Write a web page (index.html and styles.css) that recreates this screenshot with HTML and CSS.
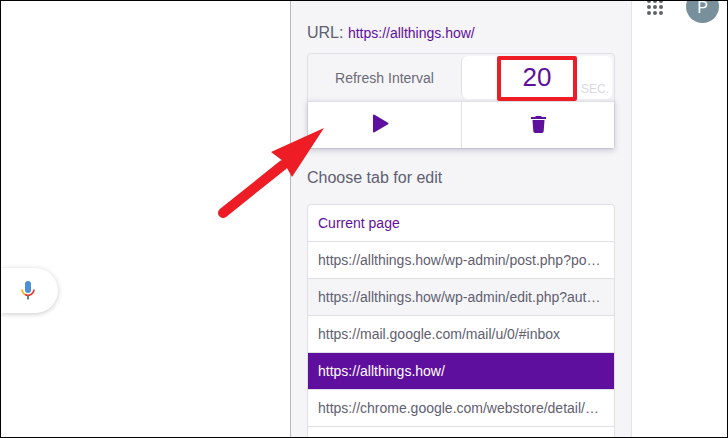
FILE: index.html
```html
<!DOCTYPE html>
<html lang="en">
<head>
  <meta charset="UTF-8">
  <title>Auto Refresh</title>
  <link rel="stylesheet" href="styles.css">
</head>
<body>
  <div class="frame">
    <div class="left-side">
      <div class="search-pill">
        <svg width="14" height="20" viewBox="0 0 14 20">
          <rect x="4" y="0" width="6" height="12" rx="3" fill="#4a8fd8"/>
          <path d="M1 8.500a6 6 0 0 0 3 5" fill="none" stroke="#f4b400" stroke-width="1.6"/>
          <path d="M4 13.500a6 6 0 0 0 6 0a6 6 0 0 0 3-5" fill="none" stroke="#e53935" stroke-width="1.6"/>
          <rect x="6" y="14.500" width="2" height="4" fill="#5b8a72"/>
        </svg>
      </div>
    </div>

    <div class="panel">
      <div class="url-line">URL: <span class="url-value">https://allthings.how/</span></div>

      <div class="controls">
        <div class="control-row">
          <div class="cell interval-label">Refresh Interval</div>
          <div class="cell interval-value">
            <span class="seconds">20</span>
            <span class="sec-unit">SEC.</span>
          </div>
        </div>
        <div class="control-row buttons-row">
          <div class="cell icon-cell play-cell">
            <svg width="17" height="19" viewBox="0 0 17 19"><path d="M1 1.500v16a1 1 0 0 0 1.500.8L16 10.200a.9.9 0 0 0 0-1.500L2.500.7A1 1 0 0 0 1 1.500z" fill="#5f0f9e"/></svg>
          </div>
          <div class="cell icon-cell trash-cell">
            <svg width="15" height="17" viewBox="0 0 15 17"><path d="M5 0h5l1 1h4v2H0V1h4zM1.500 4h12l-.8 11.200a2 2 0 0 1-2 1.800H4.300a2 2 0 0 1-2-1.800z" fill="#5f0f9e"/></svg>
          </div>
        </div>
      </div>

      <div class="choose-title">Choose tab for edit</div>

      <ul class="tab-list">
        <li class="current">Current page</li>
        <li>https://allthings.how/wp-admin/post.php?po…</li>
        <li class="hovered">https://allthings.how/wp-admin/edit.php?aut…</li>
        <li>https://mail.google.com/mail/u/0/#inbox</li>
        <li class="selected">https://allthings.how/</li>
        <li>https://chrome.google.com/webstore/detail/…</li>
        <li></li>
      </ul>
    </div>

    <div class="right-side">
      <div class="apps-grid">
        <i></i><i></i><i></i><i></i><i></i><i></i><i></i><i></i><i></i>
      </div>
      <div class="avatar">P</div>
    </div>

    <div class="red-box"></div>
    <svg class="arrow" width="120" height="100" viewBox="0 0 120 100">
      <path d="M12 93L72 45" stroke="#ee1c25" stroke-width="10" stroke-linecap="round" fill="none"/>
      <path d="M113 8L60 32L72 41L81 57z" fill="#ee1c25"/>
    </svg>
  </div>
</body>
</html>
```
FILE: styles.css
```css
* {
  box-sizing: border-box;
}

html, body {
  margin: 0;
  height: 100%;
}

body {
  font-family: "Liberation Sans", Arial, sans-serif;
  background: #fff;
  overflow: hidden;
}

.frame {
  position: relative;
  width: 728px;
  height: 438px;
  display: flex;
  border: 1px solid #000;
  overflow: hidden;
}

.left-side {
  width: 289px;
  padding-top: 267px;
}

.search-pill {
  width: 57px;
  height: 45px;
  background: #fff;
  border-radius: 0 23px 23px 0;
  box-shadow: 0 1px 5px rgba(60, 64, 67, 0.28);
  display: flex;
  align-items: center;
  justify-content: flex-end;
  padding-right: 23px;
}

.panel {
  width: 342px;
  background: #f5f5f8;
  border-left: 1px solid #b8b8bc;
  border-right: 1px solid #e4e4e8;
  padding: 22px 15px 0 16px;
}

.url-line {
  font-size: 16px;
  line-height: 20px;
  color: #5f6070;
  height: 30px;
}

.url-value {
  font-size: 14px;
  color: #5f0f9e;
}

.controls {
  border: 1px solid #dfdfe6;
  border-radius: 4px;
  width: 308px;
}

.control-row {
  display: flex;
  height: 47px;
}

.cell {
  flex: 1;
  display: flex;
  align-items: center;
  justify-content: center;
}

.cell:first-child {
  flex: 0 0 153px;
}

.cell + .cell {
  border-left: 1px solid #dfdfe6;
}

.interval-label {
  font-size: 14px;
  color: #6b6b78;
}

.interval-value {
  position: relative;
  background: #fff;
  border-radius: 6px;
  margin: 2px 2px 2px 0;
}

.seconds {
  font-size: 26px;
  color: #5f0f9e;
}

.sec-unit {
  position: absolute;
  right: 3px;
  bottom: 3px;
  font-size: 12px;
  color: #d8d8de;
}

.buttons-row {
  background: #fff;
  border-top: 1px solid #dfdfe6;
  box-shadow: 0 2px 5px 1px rgba(90, 90, 110, 0.25);
}

.icon-cell svg {
  display: block;
}

.play-cell svg {
  margin: 0 8px 4px 0;
}

.trash-cell svg {
  margin-bottom: 1px;
}

.choose-title {
  font-size: 16px;
  line-height: 20px;
  color: #5f6070;
  margin-top: 19px;
  height: 36px;
}

.tab-list {
  list-style: none;
  margin: 0;
  padding: 0;
  width: 308px;
  background: #fff;
  border: 1px solid #dfdfe6;
  border-bottom: 0;
  border-radius: 4px 4px 0 0;
}

.tab-list li {
  height: 37px;
  line-height: 36px;
  padding: 0 10px;
  font-size: 14px;
  color: #5f6070;
  border-bottom: 1px solid #dfdfe6;
  white-space: nowrap;
}

.tab-list li.current {
  color: #5f0f9e;
}

.tab-list li.hovered {
  background: #f5f5f8;
}

.tab-list li.selected {
  background: #5f0f9e;
  color: #fff;
}

.right-side {
  flex: 1;
  display: flex;
  align-items: flex-start;
  margin-top: -2px;
  padding-left: 15px;
}

.apps-grid {
  display: grid;
  grid-template-columns: repeat(3, 4px);
  gap: 2px;
}

.apps-grid i {
  width: 4px;
  height: 4px;
  border-radius: 50%;
  background: #5f6368;
}

.avatar {
  flex: none;
  width: 33px;
  height: 33px;
  margin-left: 23px;
  margin-top: -9px;
  border-radius: 50%;
  background: #78909c;
  color: #fff;
  font-size: 16px;
  line-height: 14px;
  display: flex;
  align-items: flex-start;
  justify-content: center;
  padding-top: 11px;
}

.red-box {
  position: absolute;
  left: 496px;
  top: 55px;
  width: 80px;
  height: 45px;
  border: 4px solid #ee1c25;
  border-radius: 2px;
}

.arrow {
  position: absolute;
  left: 210px;
  top: 119px;
}
```
